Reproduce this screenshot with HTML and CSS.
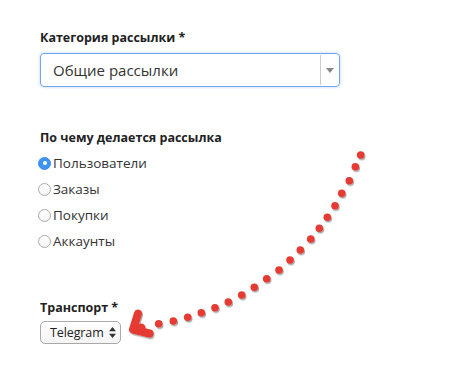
FILE: index.html
```html
<!DOCTYPE html>
<html lang="ru">
<head>
<meta charset="utf-8">
<link rel="stylesheet" href="styles.css">
</head>
<body>
<div class="page">
  <section class="field field-category">
    <div class="label">Категория рассылки *</div>
    <div class="select-big">
      <span class="select-value">Общие рассылки</span>
      <span class="select-toggle"><svg width="8" height="5" viewBox="0 0 8 5"><path d="M0 0h8L4 5z" fill="#888"/></svg></span>
    </div>
  </section>

  <section class="field field-target">
    <div class="label">По чему делается рассылка</div>
    <ul class="radios">
      <li class="radio checked"><span class="dot"></span>Пользователи</li>
      <li class="radio"><span class="dot"></span>Заказы</li>
      <li class="radio"><span class="dot"></span>Покупки</li>
      <li class="radio"><span class="dot"></span>Аккаунты</li>
    </ul>
  </section>

  <section class="field field-transport">
    <div class="label">Транспорт *</div>
    <div class="select-small">
      <span class="small-value">Telegram</span>
      <svg class="updown" width="7" height="11" viewBox="0 0 7 11"><path d="M3.5 0L7 4.3H0z M3.5 11L0 6.7h7z" fill="#333"/></svg>
    </div>
  </section>

  <svg class="arrow" width="456" height="381" viewBox="0 0 456 381">
    <defs>
      <filter id="sh" x="-50%" y="-50%" width="200%" height="200%">
        <feDropShadow dx="1" dy="1.5" stdDeviation="0.6" flood-color="#000" flood-opacity="0.35"/>
      </filter>
    </defs>
    <g fill="#e53a31" filter="url(#sh)">
      <circle cx="360.7" cy="155" r="3.8"/>
      <circle cx="355.3" cy="166.7" r="3.8"/>
      <circle cx="349.3" cy="180.7" r="3.8"/>
      <circle cx="341.7" cy="193.3" r="3.8"/>
      <circle cx="335" cy="205.7" r="3.8"/>
      <circle cx="327.3" cy="217.3" r="3.8"/>
      <circle cx="319.3" cy="228.3" r="3.8"/>
      <circle cx="310.7" cy="239" r="3.8"/>
      <circle cx="300.3" cy="250" r="3.8"/>
      <circle cx="290" cy="260" r="3.8"/>
      <circle cx="279" cy="270" r="3.8"/>
      <circle cx="266.7" cy="278.7" r="3.8"/>
      <circle cx="254.3" cy="287.3" r="3.8"/>
      <circle cx="241.7" cy="295" r="3.8"/>
      <circle cx="228.3" cy="302" r="3.8"/>
      <circle cx="215" cy="307.7" r="3.8"/>
      <circle cx="201.3" cy="312.7" r="3.8"/>
      <circle cx="187.7" cy="317.3" r="3.8"/>
      <circle cx="173.3" cy="321" r="3.8"/>
      <circle cx="158.7" cy="323.7" r="3.8"/>
    </g>
    <g filter="url(#sh)">
      <path d="M138 313.5 L133 329.5 L149.5 333.5" fill="none" stroke="#e53a31" stroke-width="8" stroke-linecap="round" stroke-linejoin="round"/>
      <circle cx="141" cy="328" r="4.5" fill="#e53a31"/>
    </g>
  </svg>
</div>
</body>
</html>
```

FILE: styles.css
```css
html, body {
  margin: 0;
  padding: 0;
  background: #fff;
}
body {
  font-family: "Open Sans", "Liberation Sans", sans-serif;
  color: #333;
  width: 456px;
  height: 381px;
  overflow: hidden;
}
.page {
  position: relative;
  padding: 30px 0 0 40px;
  height: 351px;
}
.label {
  font-weight: 700;
  font-size: 12.5px;
  line-height: 16px;
  color: #222;
}
.field-category .label {
  margin-bottom: 7px;
}
.select-big {
  box-sizing: border-box;
  width: 300px;
  height: 34px;
  border: 1px solid #6ea8ea;
  border-radius: 4px;
  box-shadow: 0 0 3px rgba(90, 150, 230, 0.45);
  display: flex;
  align-items: stretch;
}
.select-value {
  flex: 1;
  display: flex;
  align-items: center;
  padding-left: 12px;
  font-size: 15px;
  color: #333;
}
.select-toggle {
  width: 18px;
  border-left: 1px solid #ccc;
  margin: 1px 0;
  display: flex;
  align-items: center;
  justify-content: center;
}
.field-target {
  margin-top: 43px;
}
.field-target .label {
  margin-bottom: 4px;
}
.radios {
  list-style: none;
  margin: 0;
  padding: 0;
  margin-left: -2px;
}
.radio {
  display: flex;
  align-items: center;
  height: 26px;
  font-size: 13.5px;
  color: #333;
}
.dot {
  box-sizing: border-box;
  width: 13px;
  height: 13px;
  border-radius: 50%;
  border: 1px solid #aaa;
  background: linear-gradient(#fff, #f3f3f3);
  margin-right: 2px;
  display: flex;
  align-items: center;
  justify-content: center;
}
.radio.checked .dot {
  border-color: #3b8ef0;
  background: #3f92f2;
}
.radio.checked .dot::after {
  content: "";
  width: 4px;
  height: 4px;
  border-radius: 50%;
  background: #fff;
}
.field-transport {
  margin-top: 46px;
}
.field-transport .label {
  margin-bottom: 5px;
}
.select-small {
  box-sizing: border-box;
  width: 81px;
  height: 23px;
  border: 1px solid #a9a9a9;
  border-radius: 5px;
  background: linear-gradient(#fff, #f4f4f4);
  display: flex;
  align-items: center;
  justify-content: space-between;
  padding: 0 4px 0 9px;
  font-size: 12.5px;
  color: #222;
}
.small-value {
  letter-spacing: -0.1px;
}
.arrow {
  position: absolute;
  left: 0;
  top: 0;
  pointer-events: none;
}
```
